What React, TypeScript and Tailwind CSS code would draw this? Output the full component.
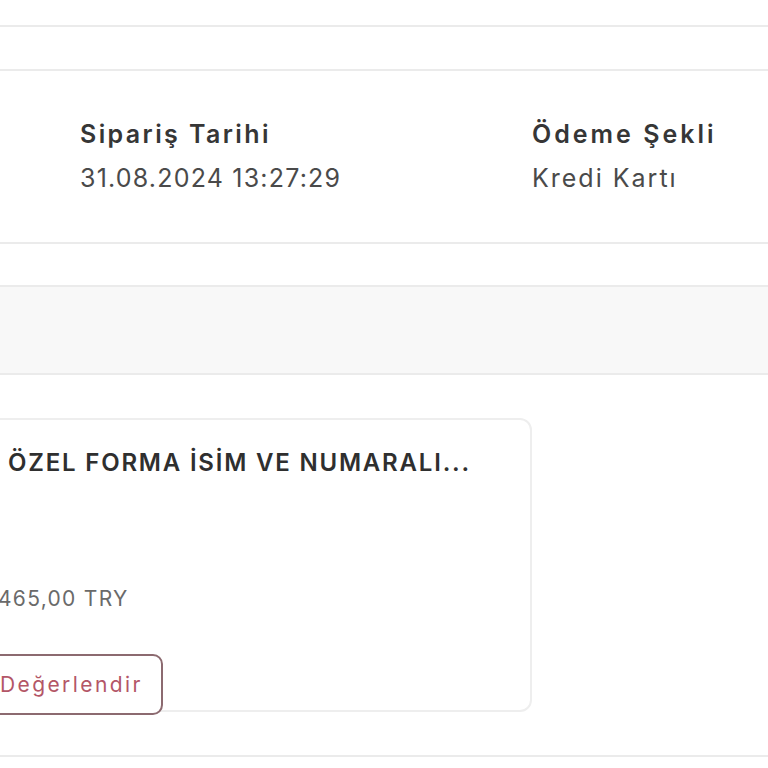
import React from "react";

const font = { fontFamily: "Inter, 'Noto Sans', sans-serif" };

export default function App() {
  return (
    <div className="w-[768px] h-[768px] overflow-hidden bg-white text-[#333]" style={font}>
      <div className="h-[27px] border-b-2 border-[#ebebeb]" />
      <div className="h-[44px] border-b-2 border-[#ebebeb]" />
      <div className="h-[173px] border-b-2 border-[#ebebeb] flex items-center">
        <div className="grid grid-cols-[452px_1fr] w-full pl-[80px] mt-[-2px]">
          <div className="flex flex-col">
            <span className="text-[25px] font-semibold leading-[44px] text-[#363636] tracking-[2.4px]">Sipariş Tarihi</span>
            <span className="text-[25px] leading-[44px] text-[#4a4a4a] tracking-[1.2px]">31.08.2024 13:27:29</span>
          </div>
          <div className="flex flex-col">
            <span className="text-[25px] font-semibold leading-[44px] text-[#363636] tracking-[3px]">Ödeme Şekli</span>
            <span className="text-[25px] leading-[44px] text-[#4a4a4a] tracking-[2px]">Kredi Kartı</span>
          </div>
        </div>
      </div>
      <div className="h-[43px] border-b-2 border-[#ebebeb]" />
      <div className="h-[88px] bg-[#f8f8f8] border-b-2 border-[#ebebeb]" />
      <div className="h-[382px] border-b-2 border-[#ebebeb] pt-[43px]">
        <div className="ml-[-30px] w-[562px] h-[294px] rounded-[12px] border-2 border-[#eeeeee] flex flex-col pl-[36px] pt-[25px]">
          <span className="shrink-0 text-[24px] font-semibold text-[#2f2f2f] leading-[36px] tracking-[1.8px]">ÖZEL FORMA İSİM VE NUMARALI...</span>
          <span className="shrink-0 mt-[103px] ml-[-10px] text-[21px] text-[#6a6a6a] leading-[30px] tracking-[1.3px]">465,00 TRY</span>
          <button className="shrink-0 mt-[40px] ml-[-28px] self-start h-[61px] px-[18px] rounded-[10px] border-2 border-[#8c6a70] bg-white text-[21px] text-[#b35667] tracking-[2.4px]">
            Değerlendir
          </button>
        </div>
      </div>
    </div>
  );
}
